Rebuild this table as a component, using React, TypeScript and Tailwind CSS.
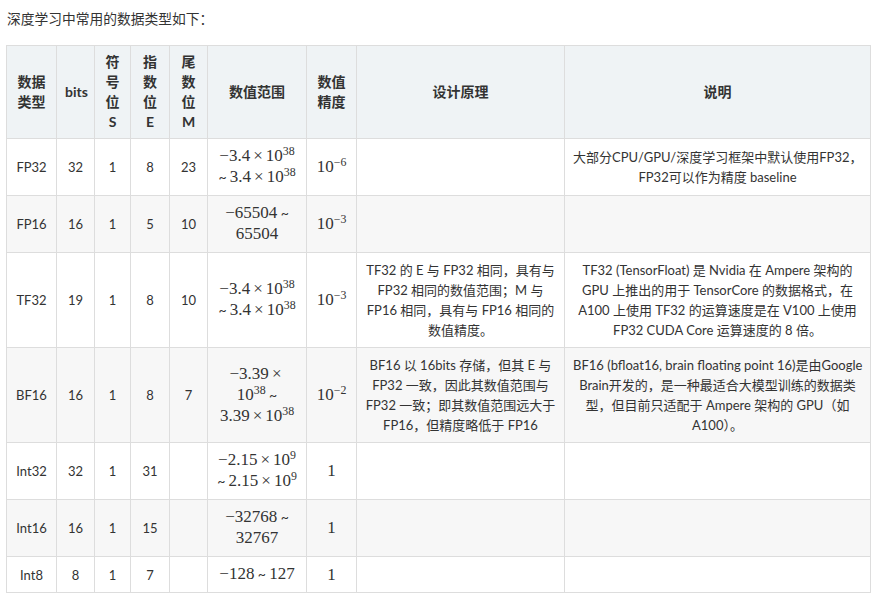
import React from 'react';

const Sup: React.FC<{ children: React.ReactNode }> = ({ children }) => (
  <sup className="text-[0.7em]">{children}</sup>
);

const Times = () => <span className="mx-[3px]">×</span>;

// 数学公式行，用衬线字体模拟 KaTeX
const M: React.FC<{ children: React.ReactNode }> = ({ children }) => (
  <span className="font-['Liberation_Serif','DejaVu_Serif',serif] text-[17px] leading-none">{children}</span>
);

const Tilde = () => <span className="text-[14px] leading-none">~</span>;

type Row = {
  name: string;
  bits: string;
  s: string;
  e: string;
  m: string;
  range: React.ReactNode;
  precision: React.ReactNode;
  design: string[];
  note: string[];
};

const rows: Row[] = [
  {
    name: 'FP32',
    bits: '32',
    s: '1',
    e: '8',
    m: '23',
    range: (
      <>
        <div><M>−3.4<Times />10<Sup>38</Sup></M></div>
        <div><Tilde /> <M>3.4<Times />10<Sup>38</Sup></M></div>
      </>
    ),
    precision: <M>10<Sup>−6</Sup></M>,
    design: [],
    note: ['大部分CPU/GPU/深度学习框架中默认使用FP32，', 'FP32可以作为精度 baseline'],
  },
  {
    name: 'FP16',
    bits: '16',
    s: '1',
    e: '5',
    m: '10',
    range: (
      <>
        <div><M>−65504</M> <Tilde /></div>
        <div><M>65504</M></div>
      </>
    ),
    precision: <M>10<Sup>−3</Sup></M>,
    design: [],
    note: [],
  },
  {
    name: 'TF32',
    bits: '19',
    s: '1',
    e: '8',
    m: '10',
    range: (
      <>
        <div><M>−3.4<Times />10<Sup>38</Sup></M></div>
        <div><Tilde /> <M>3.4<Times />10<Sup>38</Sup></M></div>
      </>
    ),
    precision: <M>10<Sup>−3</Sup></M>,
    design: [
      'TF32 的 E 与 FP32 相同，具有与',
      'FP32 相同的数值范围；M 与',
      'FP16 相同，具有与 FP16 相同的',
      '数值精度。',
    ],
    note: [
      'TF32 (TensorFloat) 是 Nvidia 在 Ampere 架构的',
      'GPU 上推出的用于 TensorCore 的数据格式，在',
      'A100 上使用 TF32 的运算速度是在 V100 上使用',
      'FP32 CUDA Core 运算速度的 8 倍。',
    ],
  },
  {
    name: 'BF16',
    bits: '16',
    s: '1',
    e: '8',
    m: '7',
    range: (
      <>
        <div><M>−3.39<Times /></M></div>
        <div><M>10<Sup>38</Sup></M> <Tilde /></div>
        <div><M>3.39<Times />10<Sup>38</Sup></M></div>
      </>
    ),
    precision: <M>10<Sup>−2</Sup></M>,
    design: [
      'BF16 以 16bits 存储，但其 E 与',
      'FP32 一致，因此其数值范围与',
      'FP32 一致；即其数值范围远大于',
      'FP16，但精度略低于 FP16',
    ],
    note: [
      'BF16 (bfloat16, brain floating point 16)是由Google',
      'Brain开发的，是一种最适合大模型训练的数据类',
      '型，但目前只适配于 Ampere 架构的 GPU（如',
      'A100）。',
    ],
  },
  {
    name: 'Int32',
    bits: '32',
    s: '1',
    e: '31',
    m: '',
    range: (
      <>
        <div><M>−2.15<Times />10<Sup>9</Sup></M></div>
        <div><Tilde /> <M>2.15<Times />10<Sup>9</Sup></M></div>
      </>
    ),
    precision: <M>1</M>,
    design: [],
    note: [],
  },
  {
    name: 'Int16',
    bits: '16',
    s: '1',
    e: '15',
    m: '',
    range: (
      <>
        <div><M>−32768</M> <Tilde /></div>
        <div><M>32767</M></div>
      </>
    ),
    precision: <M>1</M>,
    design: [],
    note: [],
  },
  {
    name: 'Int8',
    bits: '8',
    s: '1',
    e: '7',
    m: '',
    range: (
      <div><M>−128</M> <Tilde /> <M>127</M></div>
    ),
    precision: <M>1</M>,
    design: [],
    note: [],
  },
];

const headers = ['数据类型', 'bits', '符号位S', '指数位E', '尾数位M', '数值范围', '数值精度', '设计原理', '说明'];

const cell = 'border border-[#dddddd] px-2 py-[7px] text-center align-middle';

const Lines: React.FC<{ lines: string[] }> = ({ lines }) => (
  <>
    {lines.map((l) => (
      <div key={l} className="whitespace-nowrap">
        {l}
      </div>
    ))}
  </>
);

export default function App() {
  return (
    <div className="px-[6px] pt-[9px] text-[13px] leading-[20px] text-[#333333] font-['Lato','Noto_Sans_CJK_SC',sans-serif] bg-white">
      <p className="mb-4 pl-px text-[13.75px]">深度学习中常用的数据类型如下：</p>
      <table className="w-[864px] table-fixed border-collapse">
        <colgroup>
          <col className="w-[50px]" />
          <col className="w-[38px]" />
          <col className="w-[36px]" />
          <col className="w-[39px]" />
          <col className="w-[38px]" />
          <col className="w-[99px]" />
          <col className="w-[50px]" />
          <col className="w-[208px]" />
          <col className="w-[306px]" />
        </colgroup>
        <thead>
          <tr className="bg-[#eff3f5]">
            {headers.map((h) => (
              <th key={h} className="border border-[#dddddd] px-2 py-[6px] text-center align-middle font-bold text-[14px]">
                {h}
              </th>
            ))}
          </tr>
        </thead>
        <tbody>
          {rows.map((row, i) => (
            <tr key={row.name} className={i % 2 === 1 ? 'bg-[#f7f7f7]' : 'bg-white'}>
              <td className={cell}>{row.name}</td>
              <td className={cell}>{row.bits}</td>
              <td className={cell}>{row.s}</td>
              <td className={cell}>{row.e}</td>
              <td className={cell}>{row.m}</td>
              <td className={`${cell} leading-[21px]`}>{row.range}</td>
              <td className={cell}>{row.precision}</td>
              <td className={cell}><Lines lines={row.design} /></td>
              <td className={cell}><Lines lines={row.note} /></td>
            </tr>
          ))}
        </tbody>
      </table>
    </div>
  );
}
